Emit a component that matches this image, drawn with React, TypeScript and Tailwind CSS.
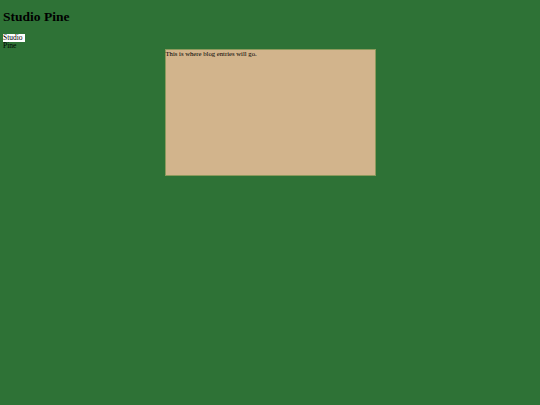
export default function App() {
  return (
    <div className="min-h-[405px] bg-[#2e7236] px-[3px] text-[6.7px] leading-[7.5px] text-black font-['Liberation_Serif',serif]">
      <h1 className="pt-[9px] mb-[10px] text-[13.5px] leading-[15px] font-bold">Studio Pine</h1>
      <nav>
        <div className="w-[22px] h-[8px] bg-white text-[7.5px] leading-[8px]">Studio Pine</div>
      </nav>
      <main className="mx-auto mt-[7px] w-[211px] h-[127px] bg-[#d2b48c] border border-[#8c9a5c]">
        This is where blog entries will go.
      </main>
    </div>
  );
}
